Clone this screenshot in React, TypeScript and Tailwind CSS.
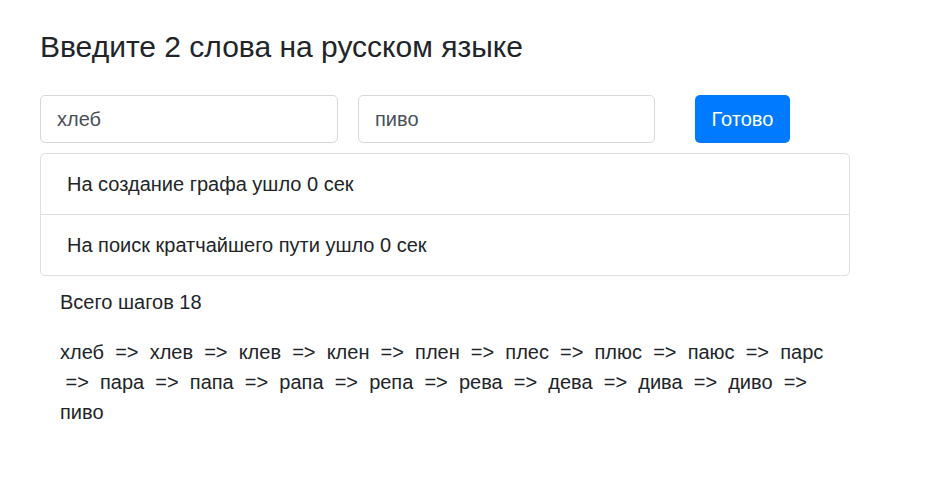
const path = ["хлеб", "хлев", "клев", "клен", "плен", "плес", "плюс", "паюс", "парс", "пара", "папа", "рапа", "репа", "рева", "дева", "дива", "диво", "пиво"];

export default function App() {
  return (
    <div className="min-h-[480px] bg-white px-10 pt-[28px] text-[#212529] [font-family:'Liberation_Sans',Arial,sans-serif]">
      <h3 className="text-[30px] leading-[38px] font-normal">Введите 2 слова на русском языке</h3>
      <form className="mt-[29px] flex items-center">
        <input
          className="h-[48px] w-[298px] rounded-[5px] border border-[#d6d9dc] px-4 text-[20px] text-[#495057] outline-none"
          defaultValue="хлеб"
        />
        <input
          className="ml-[20px] h-[48px] w-[297px] rounded-[5px] border border-[#d6d9dc] px-4 text-[20px] text-[#495057] outline-none"
          defaultValue="пиво"
        />
        <button type="button" className="ml-[40px] h-[48px] w-[95px] rounded-[5px] bg-[#007bff] text-[20px] text-white">
          Готово
        </button>
      </form>
      <ul className="mt-[10px] w-[810px] rounded-[5px] border border-[#dfdfdf] text-[20px]">
        <li className="px-[26px] py-[15px] leading-[30px]">На создание графа ушло 0 сек</li>
        <li className="border-t border-[#dfdfdf] px-[26px] py-[15px] leading-[30px]">На поиск кратчайшего пути ушло 0 сек</li>
      </ul>
      <div className="w-[810px] px-5">
        <p className="mt-[11px] text-[20px] leading-[30px]">Всего шагов 18</p>
        <p className="mt-[20px] text-[20px] leading-[30px]">
          {path.map((word, i) => (
            <span key={word}>
              {word}
              {i < path.length - 1 ? " \u00a0=>\u00a0 " : ""}
            </span>
          ))}
        </p>
      </div>
    </div>
  );
}
